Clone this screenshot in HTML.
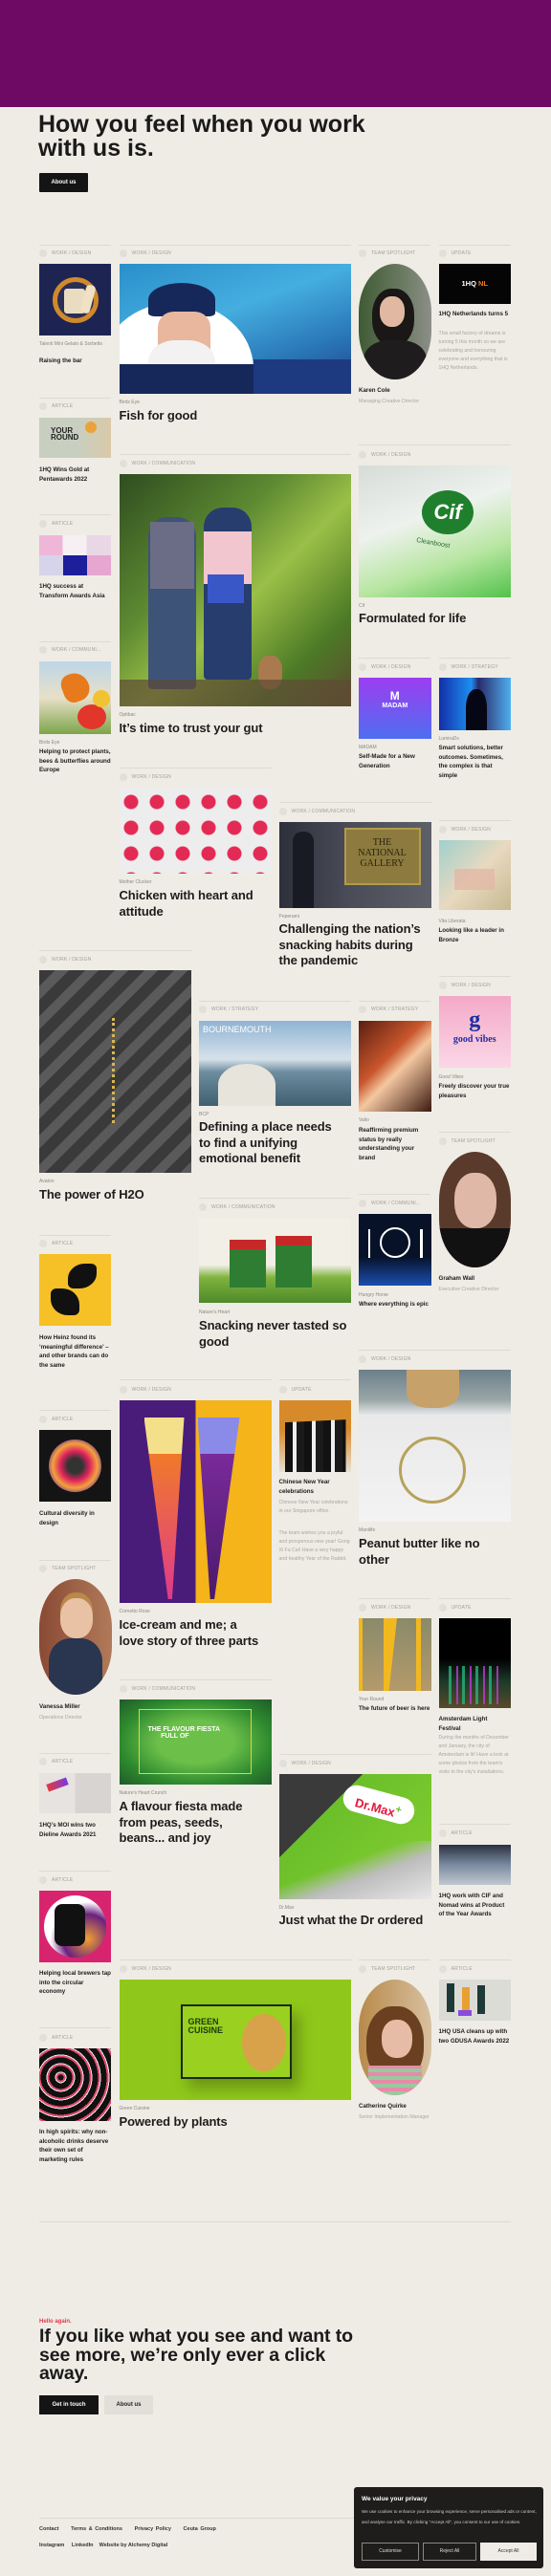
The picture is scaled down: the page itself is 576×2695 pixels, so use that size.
<!DOCTYPE html>
<html><head><meta charset="utf-8">
<style>
*{margin:0;padding:0;box-sizing:border-box}
body{width:576px;height:2695px;background:#efece5;font-family:"Liberation Sans",sans-serif;color:#1a1a1a;position:relative;overflow:hidden}
.a{position:absolute}
.ln{position:absolute;height:1px;background:#dedad2}
.lb{position:absolute;font-size:5px;line-height:8px;color:#a3a09a;letter-spacing:.2px;padding-left:13px;white-space:nowrap}
.lb:before{content:"";position:absolute;left:0;top:0;width:8px;height:8px;border-radius:50%;background:#e2dfd8}
.br{position:absolute;font-size:5px;line-height:8px;color:#8a8882}
.t{position:absolute;font-weight:bold;font-size:6.2px;line-height:9.6px;color:#1c1c1c}
.T{position:absolute;font-weight:bold;font-size:13px;line-height:16.5px;color:#1c1c1c;letter-spacing:-.1px;white-space:nowrap}
.p{position:absolute;font-size:5.2px;line-height:9px;color:#a9a7a0}
.ov{position:absolute;border-radius:50%/42%;overflow:hidden}
</style></head><body>
<div class="a" style="left:40px;top:92px;font-weight:bold;font-size:25px;line-height:25px;color:#1a1a1a;z-index:0;letter-spacing:0">What we do isn't all we are.</div>
<div class="a" style="left:0;top:0;width:576px;height:112px;background:#6e0a63;z-index:1"></div>
<div class="a" style="left:40px;top:118px;font-weight:bold;font-size:25px;line-height:25px;letter-spacing:0">How you feel when you work<br>with us is.</div>
<div class="a" style="left:41px;top:181px;width:51px;height:20px;background:#141414;color:#fff;font-size:6px;font-weight:bold;line-height:20px;text-align:center;border-radius:1px">About us</div>

<!-- 1 Talenti -->
<div class="ln" style="left:41px;top:256px;width:75px"></div><div class="lb" style="left:41px;top:261px">WORK / DESIGN</div>
<div class="a" style="left:41px;top:276px;width:75px;height:75px;background:#1d2452"><div class="a" style="left:14px;top:14px;width:48px;height:48px;border-radius:50%;border:5px solid #d08a2c;background:#2b2f55"></div><div class="a" style="left:26px;top:26px;width:22px;height:26px;background:#e9dcc0;border-radius:3px"></div><div class="a" style="left:46px;top:22px;width:10px;height:30px;background:#f0e1c4;border-radius:4px;transform:rotate(15deg)"></div></div>
<div class="br" style="left:41px;top:356px;width:75px">Talenti Mini Gelato &amp; Sorbetto</div>
<div class="t" style="left:41px;top:373px">Raising the bar</div>

<!-- 2 Birds Eye -->
<div class="ln" style="left:124.5px;top:256px;width:242px"></div><div class="lb" style="left:124.5px;top:261px">WORK / DESIGN</div>
<div class="a" style="left:124.5px;top:276px;width:242px;height:136px;background:linear-gradient(160deg,#2a8fc9,#45aee0 40%,#2b7ab9 70%,#1f3f86);overflow:hidden"><div class="a" style="left:-20px;top:40px;width:160px;height:140px;border-radius:50%;background:#fff"></div><div class="a" style="left:30px;top:20px;width:70px;height:35px;border-radius:50% 50% 10% 10%;background:#16285a"></div><div class="a" style="left:40px;top:50px;width:55px;height:55px;background:#e8b79d;border-radius:30%"></div><div class="a" style="left:30px;top:80px;width:70px;height:56px;background:#f2f2f2;border-radius:40% 40% 0 0"></div><div class="a" style="left:0;top:105px;width:150px;height:31px;background:#16285a"></div><div class="a" style="left:140px;top:100px;width:102px;height:36px;background:#1d3a80"></div></div>
<div class="br" style="left:124.5px;top:417px">Birds Eye</div>
<div class="T" style="left:124.5px;top:427px">Fish for good</div>

<!-- 3 Karen -->
<div class="ln" style="left:375px;top:256px;width:75px"></div><div class="lb" style="left:375px;top:261px">TEAM SPOTLIGHT</div>
<div class="ov" style="left:375px;top:276px;width:76px;height:121px;background:linear-gradient(90deg,#3f5b35,#6b7a62 60%,#8c8f88)"><div class="a" style="left:14px;top:26px;width:44px;height:60px;border-radius:45%;background:#1a1716"></div><div class="a" style="left:22px;top:34px;width:26px;height:32px;border-radius:45%;background:#e1b8a2"></div><div class="a" style="left:5px;top:80px;width:66px;height:50px;background:#1e1c1c;border-radius:40% 40% 0 0"></div></div>
<div class="t" style="left:375px;top:404px">Karen Cole</div>
<div class="p" style="left:375px;top:416px;width:70px">Managing Creative Director</div>

<!-- 4 NL -->
<div class="ln" style="left:458.5px;top:256px;width:75.5px"></div><div class="lb" style="left:458.5px;top:261px">UPDATE</div>
<div class="a" style="left:458.5px;top:276px;width:75.5px;height:42px;background:#050505;color:#fff;font-weight:bold;font-size:7.5px;line-height:42px;text-align:center">1HQ <span style="color:#f07a1a">NL</span></div>
<div class="t" style="left:458.5px;top:324px;width:76px">1HQ Netherlands turns 5</div>
<div class="p" style="left:458.5px;top:345px;width:75px">This small factory of dreams is turning 5 this month so we are celebrating and honouring everyone and everything that is 1HQ Netherlands.</div>

<!-- 5 -->
<div class="ln" style="left:41px;top:416px;width:75px"></div><div class="lb" style="left:41px;top:421px">ARTICLE</div>
<div class="a" style="left:41px;top:437px;width:75px;height:42px;background:linear-gradient(90deg,#c9cfc0 55%,#d9c9a8)"><div class="a" style="left:12px;top:10px;font-weight:bold;font-size:8px;line-height:7px;color:#222">YOUR<br>ROUND</div><div class="a" style="left:48px;top:4px;width:12px;height:12px;border-radius:50%;background:#eaa23a"></div></div>
<div class="t" style="left:41px;top:487px;width:75px">1HQ Wins Gold at Pentawards 2022</div>

<!-- 6 -->
<div class="ln" style="left:41px;top:538px;width:75px"></div><div class="lb" style="left:41px;top:544px">ARTICLE</div>
<div class="a" style="left:41px;top:560px;width:75px;height:42px;background:linear-gradient(90deg,#f0b6d8 33%,#f6f0f4 33%,#f6f0f4 66%,#e9d7e6 66%)"><div class="a" style="left:25px;top:21px;width:25px;height:21px;background:#1c1e9a"></div><div class="a" style="left:0;top:21px;width:25px;height:21px;background:#d6d4ea"></div><div class="a" style="left:50px;top:21px;width:25px;height:21px;background:#e6a6cf"></div></div>
<div class="t" style="left:41px;top:609px;width:72px">1HQ success at Transform Awards Asia</div>

<!-- 7 -->
<div class="ln" style="left:41px;top:671px;width:75px"></div><div class="lb" style="left:41px;top:676px">WORK / COMMUNI...</div>
<div class="a" style="left:41px;top:692px;width:75px;height:76px;background:linear-gradient(180deg,#bcd6e8,#e8e0c8 50%,#7da54a)"><div class="a" style="left:24px;top:12px;width:28px;height:30px;background:#e77a1c;border-radius:40% 60% 50% 40%;transform:rotate(-20deg)"></div><div class="a" style="left:40px;top:45px;width:30px;height:26px;background:#e2362a;border-radius:50%"></div><div class="a" style="left:56px;top:30px;width:18px;height:18px;background:#f1c232;border-radius:50%"></div></div>
<div class="br" style="left:41px;top:773px">Birds Eye</div>
<div class="t" style="left:41px;top:782px;width:75px">Helping to protect plants, bees &amp; butterflies around Europe</div>

<!-- 8 Optibac -->
<div class="ln" style="left:124.5px;top:475px;width:242px"></div><div class="lb" style="left:124.5px;top:481px">WORK / COMMUNICATION</div>
<div class="a" style="left:124.5px;top:496px;width:242px;height:243px;background:linear-gradient(135deg,#2f4d1f,#5d8a32 35%,#9bbf47 55%,#4c7a26 80%,#5d4a31);overflow:hidden"><div class="a" style="left:30px;top:45px;width:50px;height:180px;background:#3d5378;border-radius:20px 20px 4px 4px"></div><div class="a" style="left:32px;top:50px;width:46px;height:70px;background:#6b6d86"></div><div class="a" style="left:88px;top:35px;width:50px;height:180px;background:#263d6e;border-radius:20px 20px 4px 4px"></div><div class="a" style="left:88px;top:60px;width:50px;height:55px;background:#f2c6cf"></div><div class="a" style="left:92px;top:105px;width:38px;height:30px;background:#3a57c8"></div><div class="a" style="left:145px;top:190px;width:25px;height:35px;background:#a87a4e;border-radius:40%"></div><div class="a" style="left:0;top:215px;width:242px;height:28px;background:#5e4a35;opacity:.7"></div></div>
<div class="br" style="left:124.5px;top:744px">Optibac</div>
<div class="T" style="left:124.5px;top:754px">It’s time to trust your gut</div>

<!-- 9 Cif -->
<div class="ln" style="left:375px;top:465px;width:159px"></div><div class="lb" style="left:375px;top:472px">WORK / DESIGN</div>
<div class="a" style="left:375px;top:487px;width:159px;height:138px;background:linear-gradient(160deg,#d8dcd8,#eef2ee 40%,#b7e6a1 70%,#52c24a);overflow:hidden"><div class="a" style="left:66px;top:26px;width:54px;height:46px;border-radius:50%;background:#1f7f2c;color:#fff;font-weight:bold;font-style:italic;font-size:22px;line-height:46px;text-align:center">Cif</div><div class="a" style="left:60px;top:78px;font-size:7px;color:#2b6b33;transform:rotate(10deg)">Cleanboost</div></div>
<div class="br" style="left:375px;top:630px">Cif</div>
<div class="T" style="left:375px;top:639px">Formulated for life</div>

<!-- 10 Madam -->
<div class="ln" style="left:375px;top:688px;width:75px"></div><div class="lb" style="left:375px;top:694px">WORK / DESIGN</div>
<div class="a" style="left:375px;top:709px;width:75.5px;height:64px;background:linear-gradient(180deg,#9c3ef0,#4f6ef0);color:#fff;text-align:center;font-weight:bold"><div style="font-size:12px;padding-top:12px">M</div><div style="font-size:7px">MADAM</div></div>
<div class="br" style="left:375px;top:778px">MADAM</div>
<div class="t" style="left:375px;top:787px;width:75px">Self-Made for a New Generation</div>

<!-- 11 Lumira -->
<div class="ln" style="left:458.5px;top:688px;width:75.5px"></div><div class="lb" style="left:458.5px;top:694px">WORK / STRATEGY</div>
<div class="a" style="left:458.5px;top:709px;width:75.5px;height:55px;background:linear-gradient(90deg,#1230a8,#1e8ef0 45%,#2a2a6a 55%,#4fb0f0)"><div class="a" style="left:28px;top:12px;width:22px;height:43px;background:#050814;border-radius:45% 45% 0 0"></div></div>
<div class="br" style="left:458.5px;top:769px">LumiraDx</div>
<div class="t" style="left:458.5px;top:778px;width:75px">Smart solutions, better outcomes. Sometimes, the complex is that simple</div>

<!-- 12 Mother Clucker -->
<div class="ln" style="left:124.5px;top:803px;width:159px"></div><div class="lb" style="left:124.5px;top:809px">WORK / DESIGN</div>
<div class="a" style="left:124.5px;top:824px;width:159px;height:90px;background:#eeeded;background-image:radial-gradient(circle at 12px 15px,#e32a55 7px,transparent 8px);background-size:27px 27px"></div>
<div class="br" style="left:124.5px;top:919px">Mother Clucker</div>
<div class="T" style="left:124.5px;top:929px">Chicken with heart and<br>attitude</div>

<!-- 13 Peperami -->
<div class="ln" style="left:291.5px;top:839px;width:159px"></div><div class="lb" style="left:291.5px;top:845px">WORK / COMMUNICATION</div>
<div class="a" style="left:291.5px;top:860px;width:159px;height:90px;background:linear-gradient(90deg,#2d2f3a,#494c58 45%,#5d6068)"><div class="a" style="left:68px;top:6px;width:80px;height:60px;background:#8c7a3e;border:2px solid #b49a4c;color:#2a2412;font-family:'Liberation Serif',serif;font-size:10px;line-height:11px;text-align:center;padding-top:8px">THE<br>NATIONAL<br>GALLERY</div><div class="a" style="left:14px;top:10px;width:22px;height:80px;background:#191b24;border-radius:10px 10px 0 0"></div></div>
<div class="br" style="left:291.5px;top:955px">Peperami</div>
<div class="T" style="left:291.5px;top:964px">Challenging the nation’s<br>snacking habits during<br>the pandemic</div>

<!-- 14 Vita -->
<div class="ln" style="left:458.5px;top:858px;width:75.5px"></div><div class="lb" style="left:458.5px;top:864px">WORK / DESIGN</div>
<div class="a" style="left:458.5px;top:879px;width:75.5px;height:73px;background:linear-gradient(135deg,#9fd0cc,#e8d9c0 50%,#c7b98f)"><div class="a" style="left:16px;top:30px;width:42px;height:22px;background:#e2b8a6;opacity:.8"></div></div>
<div class="br" style="left:458.5px;top:960px">Vita Liberata</div>
<div class="t" style="left:458.5px;top:969px;width:75px">Looking like a leader in Bronze</div>

<!-- 15 Avaton -->
<div class="ln" style="left:41px;top:994px;width:159px"></div><div class="lb" style="left:41px;top:1000px">WORK / DESIGN</div>
<div class="a" style="left:41px;top:1015px;width:159px;height:212px;background:repeating-linear-gradient(135deg,#3a3a3a 0 12px,#5a5a5a 12px 22px);"><div class="a" style="left:76px;top:50px;width:4px;height:110px;border-left:3px dotted #d9b652"></div></div>
<div class="br" style="left:41px;top:1232px">Avaton</div>
<div class="T" style="left:41px;top:1242px">The power of H2O</div>

<!-- 16 BCP -->
<div class="ln" style="left:208px;top:1047px;width:159px"></div><div class="lb" style="left:208px;top:1052px">WORK / STRATEGY</div>
<div class="a" style="left:208px;top:1068px;width:159px;height:89px;background:linear-gradient(180deg,#8fb4d4,#d7e2ea 45%,#6d8da0 60%,#3f6070)"><div class="a" style="left:4px;top:4px;color:#fff;font-size:9px">BOURNEMOUTH</div><div class="a" style="left:20px;top:45px;width:60px;height:44px;background:#e7e4dc;border-radius:50% 50% 0 0"></div></div>
<div class="br" style="left:208px;top:1162px">BCP</div>
<div class="T" style="left:208px;top:1171px">Defining a place needs<br>to find a unifying<br>emotional benefit</div>

<!-- 17 Valio -->
<div class="ln" style="left:375px;top:1047px;width:75px"></div><div class="lb" style="left:375px;top:1052px">WORK / STRATEGY</div>
<div class="a" style="left:375px;top:1068px;width:75.5px;height:95px;background:linear-gradient(135deg,#5a1e10,#c9562c 40%,#f4c7a0 55%,#3a1a10)"></div>
<div class="br" style="left:375px;top:1168px">Valio</div>
<div class="t" style="left:375px;top:1178px;width:75px">Reaffirming premium status by really understanding your brand</div>

<!-- 18 Good vibes -->
<div class="ln" style="left:458.5px;top:1021px;width:75.5px"></div><div class="lb" style="left:458.5px;top:1027px">WORK / DESIGN</div>
<div class="a" style="left:458.5px;top:1042px;width:75.5px;height:75px;background:linear-gradient(180deg,#f3a9c8,#fbd7e6);color:#1d2ea0;font-family:'Liberation Serif',serif;text-align:center;font-weight:bold"><div style="font-size:24px;line-height:30px;padding-top:10px">g</div><div style="font-size:10px">good vibes</div></div>
<div class="br" style="left:458.5px;top:1123px">Good Vibes</div>
<div class="t" style="left:458.5px;top:1132px;width:75px">Freely discover your true pleasures</div>

<!-- 19 Graham -->
<div class="ln" style="left:458.5px;top:1184px;width:75.5px"></div><div class="lb" style="left:458.5px;top:1190px">TEAM SPOTLIGHT</div>
<div class="ov" style="left:458.5px;top:1205px;width:75.5px;height:121px;background:#5a3a2a"><div class="a" style="left:16px;top:22px;width:44px;height:58px;border-radius:45%;background:#e0b8a8"></div><div class="a" style="left:0;top:80px;width:76px;height:45px;background:#111"></div></div>
<div class="t" style="left:458.5px;top:1333px">Graham Wall</div>
<div class="p" style="left:458.5px;top:1345px;width:72px">Executive Creative Director</div>

<!-- 20 Heinz -->
<div class="ln" style="left:41px;top:1292px;width:75px"></div><div class="lb" style="left:41px;top:1297px">ARTICLE</div>
<div class="a" style="left:41px;top:1312px;width:75px;height:75px;background:#f6c027"><div class="a" style="left:30px;top:10px;width:30px;height:26px;background:#111;border-radius:60% 20% 60% 20%"></div><div class="a" style="left:12px;top:36px;width:30px;height:28px;background:#111;border-radius:20% 60% 20% 60%"></div></div>
<div class="t" style="left:41px;top:1395px;width:75px">How Heinz found its ‘meaningful difference’ – and other brands can do the same</div>

<!-- 21 Nature's heart -->
<div class="ln" style="left:208px;top:1253px;width:159px"></div><div class="lb" style="left:208px;top:1259px">WORK / COMMUNICATION</div>
<div class="a" style="left:208px;top:1275px;width:159px;height:88px;background:linear-gradient(180deg,#f2efe6 55%,#7fb33e 70%,#4e8a2a)"><div class="a" style="left:32px;top:22px;width:38px;height:50px;background:#2e7d32;border-top:10px solid #c62828"></div><div class="a" style="left:80px;top:18px;width:38px;height:54px;background:#2e7d32;border-top:10px solid #c62828"></div></div>
<div class="br" style="left:208px;top:1369px">Nature’s Heart</div>
<div class="T" style="left:208px;top:1379px">Snacking never tasted so<br>good</div>

<!-- 22 Hungry horse -->
<div class="ln" style="left:375px;top:1249px;width:75px"></div><div class="lb" style="left:375px;top:1255px">WORK / COMMUNI...</div>
<div class="a" style="left:375px;top:1270px;width:75.5px;height:75px;background:linear-gradient(180deg,#071228 60%,#1b4fb0)"><div class="a" style="left:22px;top:14px;width:32px;height:32px;border:2px solid #fff;border-radius:50%"></div><div class="a" style="left:10px;top:16px;width:2px;height:30px;background:#fff"></div><div class="a" style="left:64px;top:16px;width:3px;height:30px;background:#fff"></div></div>
<div class="br" style="left:375px;top:1351px">Hungry Horse</div>
<div class="t" style="left:375px;top:1360px;width:75px">Where everything is epic</div>

<!-- 23 Peanut -->
<div class="ln" style="left:375px;top:1412px;width:159px"></div><div class="lb" style="left:375px;top:1418px">WORK / DESIGN</div>
<div class="a" style="left:375px;top:1433px;width:159px;height:159px;background:linear-gradient(180deg,#6b7f8a,#9aa7a8 20%,#e9e9e9 30%,#f3f3f3);overflow:hidden"><div class="a" style="left:50px;top:0;width:55px;height:40px;background:#c6a26a;border-radius:0 0 40% 40%"></div><div class="a" style="left:42px;top:70px;width:70px;height:70px;border-radius:50%;border:3px solid #b7a25c"></div></div>
<div class="br" style="left:375px;top:1597px">Manilife</div>
<div class="T" style="left:375px;top:1607px">Peanut butter like no<br>other</div>

<!-- 24 Cornetto -->
<div class="ln" style="left:124.5px;top:1443px;width:159px"></div><div class="lb" style="left:124.5px;top:1450px">WORK / DESIGN</div>
<div class="a" style="left:124.5px;top:1465px;width:159px;height:212px;background:linear-gradient(90deg,#4a1c7a 50%,#f4b41a 50%);overflow:hidden"><div class="a" style="left:26px;top:18px;width:42px;height:190px;background:linear-gradient(180deg,#f4e08a 20%,#f07a2a 20%,#e03a8a);clip-path:polygon(0 0,100% 0,70% 100%,60% 100%)"></div><div class="a" style="left:82px;top:18px;width:44px;height:190px;background:linear-gradient(180deg,#8a8ae8 20%,#7a2a9a 20%,#4a1a6a);clip-path:polygon(0 0,100% 0,40% 100%,30% 100%)"></div></div>
<div class="br" style="left:124.5px;top:1682px">Cornetto Rose</div>
<div class="T" style="left:124.5px;top:1692px">Ice-cream and me; a<br>love story of three parts</div>

<!-- 25 CNY -->
<div class="ln" style="left:291.5px;top:1443px;width:75px"></div><div class="lb" style="left:291.5px;top:1450px">UPDATE</div>
<div class="a" style="left:291.5px;top:1465px;width:75.5px;height:75px;background:linear-gradient(180deg,#d78a2a 40%,#e8e0d4)"><div class="a" style="left:6px;top:14px;width:64px;height:61px;background:repeating-linear-gradient(90deg,#111 0 8px,#eee 8px 12px,#1a1a1a 12px 20px);clip-path:polygon(0 15%,100% 10%,100% 100%,0 100%)"></div></div>
<div class="t" style="left:291.5px;top:1546px;width:75px">Chinese New Year celebrations</div>
<div class="p" style="left:291.5px;top:1568px;width:75px">Chinese New Year celebrations in our Singapore office.</div>
<div class="p" style="left:291.5px;top:1600px;width:75px">The team wishes you a joyful and prosperous new year! Gong Xi Fa Cai! Have a very happy and healthy Year of the Rabbit.</div>

<!-- 26 Cultural -->
<div class="ln" style="left:41px;top:1475px;width:75px"></div><div class="lb" style="left:41px;top:1481px">ARTICLE</div>
<div class="a" style="left:41px;top:1496px;width:75px;height:75px;background:#141414"><div class="a" style="left:10px;top:10px;width:55px;height:55px;border-radius:50%;background:radial-gradient(circle,#333 20%,#e0245e 40%,#f2a33a 60%,#6a2aa0 80%,transparent 82%)"></div></div>
<div class="t" style="left:41px;top:1579px;width:75px">Cultural diversity in design</div>

<!-- 27 Vanessa -->
<div class="ln" style="left:41px;top:1632px;width:75px"></div><div class="lb" style="left:41px;top:1637px">TEAM SPOTLIGHT</div>
<div class="ov" style="left:41px;top:1652px;width:75.5px;height:121px;background:linear-gradient(90deg,#8a4a34,#b07a5a)"><div class="a" style="left:22px;top:20px;width:34px;height:42px;border-radius:45%;background:#e9c1a4;box-shadow:0 -6px 0 #b9884a"></div><div class="a" style="left:10px;top:62px;width:56px;height:60px;background:#2a3550;border-radius:40% 40% 0 0"></div></div>
<div class="t" style="left:41px;top:1781px">Vanessa Miller</div>
<div class="p" style="left:41px;top:1793px;width:75px">Operations Director</div>

<!-- 28 Your round -->
<div class="ln" style="left:375px;top:1672px;width:75px"></div><div class="lb" style="left:375px;top:1678px">WORK / DESIGN</div>
<div class="a" style="left:375px;top:1693px;width:75.5px;height:76px;background:linear-gradient(180deg,#8a8a6a,#b49a6a)"><div class="a" style="left:0;top:0;width:4px;height:76px;background:#f2b820"></div><div class="a" style="left:26px;top:0;width:14px;height:76px;background:#f2b820;clip-path:polygon(0 0,100% 0,40% 100%,0 100%)"></div><div class="a" style="left:60px;top:0;width:5px;height:76px;background:#f2b820"></div></div>
<div class="br" style="left:375px;top:1774px">Your Round</div>
<div class="t" style="left:375px;top:1783px;width:75px">The future of beer is here</div>

<!-- 29 Amsterdam -->
<div class="ln" style="left:458.5px;top:1672px;width:75.5px"></div><div class="lb" style="left:458.5px;top:1678px">UPDATE</div>
<div class="a" style="left:458.5px;top:1693px;width:75.5px;height:94px;background:linear-gradient(180deg,#000 45%,#1b3a2a 70%,#5a4a2a)"><div class="a" style="left:10px;top:50px;width:55px;height:40px;background:repeating-linear-gradient(90deg,#2ab07a 0 3px,transparent 3px 8px,#c03ad0 8px 10px,transparent 10px 14px);opacity:.8"></div></div>
<div class="t" style="left:458.5px;top:1794px;width:75px">Amsterdam Light Festival</div>
<div class="p" style="left:458.5px;top:1814px;width:75px">During the months of December and January, the city of Amsterdam is lit! Have a look at some photos from the team's visits to the city's installations.</div>

<!-- 30 Flavour fiesta -->
<div class="ln" style="left:124.5px;top:1757px;width:159px"></div><div class="lb" style="left:124.5px;top:1763px">WORK / COMMUNICATION</div>
<div class="a" style="left:124.5px;top:1778px;width:159px;height:89px;background:radial-gradient(ellipse at center,#6cc04a 35%,#2e8a2e 70%,#1f5a2a);"><div class="a" style="left:20px;top:10px;width:118px;height:68px;border:1px solid #e8d23a"></div><div class="a" style="left:30px;top:28px;color:#fff;font-weight:bold;font-size:7px;line-height:7px">THE FLAVOUR FIESTA<br>&nbsp;&nbsp;&nbsp;&nbsp;&nbsp;&nbsp;&nbsp;FULL OF</div></div>
<div class="br" style="left:124.5px;top:1872px">Nature’s Heart Crunch</div>
<div class="T" style="left:124.5px;top:1882px">A flavour fiesta made<br>from peas, seeds,<br>beans... and joy</div>

<!-- 31 MOI -->
<div class="ln" style="left:41px;top:1834px;width:75px"></div><div class="lb" style="left:41px;top:1839px">ARTICLE</div>
<div class="a" style="left:41px;top:1855px;width:75px;height:42px;background:linear-gradient(90deg,#e6e3e0 50%,#d8d4d2 50%)"><div class="a" style="left:8px;top:8px;width:22px;height:8px;background:linear-gradient(90deg,#e23a3a,#7a3ae0);transform:rotate(-20deg)"></div></div>
<div class="t" style="left:41px;top:1905px;width:75px">1HQ’s MOI wins two Dieline Awards 2021</div>

<!-- 32 Dr Max -->
<div class="ln" style="left:291.5px;top:1835px;width:159px"></div><div class="lb" style="left:291.5px;top:1841px">WORK / DESIGN</div>
<div class="a" style="left:291.5px;top:1856px;width:159px;height:131px;background:linear-gradient(135deg,#3a3a3a 30%,#6bbf2a 30%,#86cf32);overflow:hidden"><div class="a" style="left:66px;top:18px;width:76px;height:28px;border-radius:14px;background:#fff;color:#e2183a;font-weight:bold;font-size:13px;line-height:28px;text-align:center;transform:rotate(15deg)">Dr.Max<sup style="color:#6bbf2a">+</sup></div><div class="a" style="left:0;top:70px;width:159px;height:61px;background:linear-gradient(160deg,transparent 40%,#bdbdbd 60%,#e8e8e8)"></div></div>
<div class="br" style="left:291.5px;top:1992px">Dr.Max</div>
<div class="T" style="left:291.5px;top:2001px">Just what the Dr ordered</div>

<!-- 33 -->
<div class="ln" style="left:458.5px;top:1908px;width:75.5px"></div><div class="lb" style="left:458.5px;top:1914px">ARTICLE</div>
<div class="a" style="left:458.5px;top:1930px;width:75.5px;height:42px;background:linear-gradient(180deg,#2a3040,#7a8aa0 50%,#c0c8d0)"></div>
<div class="t" style="left:458.5px;top:1979px;width:75px">1HQ work with CIF and Nomad wins at Product of the Year Awards</div>

<!-- 34 -->
<div class="ln" style="left:41px;top:1957px;width:75px"></div><div class="lb" style="left:41px;top:1963px">ARTICLE</div>
<div class="a" style="left:41px;top:1978px;width:75px;height:75px;background:#d8246e"><div class="a" style="left:5px;top:5px;width:65px;height:65px;border-radius:50%;background:radial-gradient(circle at 70% 70%,#f0a030,#6a2080 40%,#fff 60%)"></div><div class="a" style="left:16px;top:14px;width:32px;height:44px;border-radius:8px;background:#111"></div></div>
<div class="t" style="left:41px;top:2060px;width:75px">Helping local brewers tap into the circular economy</div>

<!-- 35 Green Cuisine -->
<div class="ln" style="left:124.5px;top:2050px;width:242px"></div><div class="lb" style="left:124.5px;top:2056px">WORK / DESIGN</div>
<div class="a" style="left:124.5px;top:2071px;width:242px;height:126px;background:#8fc81a"><div class="a" style="left:64px;top:26px;width:116px;height:78px;background:#9ad020;border:2px solid #1a2a12;box-shadow:8px 10px 14px rgba(0,0,0,.25)"><div class="a" style="left:6px;top:12px;font-weight:bold;font-size:9px;line-height:9px;color:#1a3a12">GREEN<br>CUISINE</div><div class="a" style="left:62px;top:8px;width:46px;height:60px;border-radius:50%;background:#d8a24a"></div></div></div>
<div class="br" style="left:124.5px;top:2202px">Green Cuisine</div>
<div class="T" style="left:124.5px;top:2212px">Powered by plants</div>

<!-- 36 Catherine -->
<div class="ln" style="left:375px;top:2050px;width:75px"></div><div class="lb" style="left:375px;top:2056px">TEAM SPOTLIGHT</div>
<div class="ov" style="left:375px;top:2071px;width:75.5px;height:121px;background:linear-gradient(90deg,#b88a4a,#d8c0a0)"><div class="a" style="left:8px;top:28px;width:60px;height:80px;border-radius:45%;background:#6a4020"></div><div class="a" style="left:24px;top:42px;width:32px;height:40px;border-radius:45%;background:#e6bca6"></div><div class="a" style="left:10px;top:90px;width:56px;height:35px;background:repeating-linear-gradient(0deg,#e98aa8 0 4px,#9ac8a0 4px 8px)"></div></div>
<div class="t" style="left:375px;top:2199px">Catherine Quirke</div>
<div class="p" style="left:375px;top:2211px;width:75px">Senior Implementation Manager</div>

<!-- 37 GDUSA -->
<div class="ln" style="left:458.5px;top:2050px;width:75.5px"></div><div class="lb" style="left:458.5px;top:2056px">ARTICLE</div>
<div class="a" style="left:458.5px;top:2071px;width:75.5px;height:43px;background:#dcdcd6"><div class="a" style="left:8px;top:4px;width:8px;height:30px;background:#1d3a38"></div><div class="a" style="left:24px;top:8px;width:8px;height:28px;background:#e8a030"></div><div class="a" style="left:40px;top:6px;width:8px;height:30px;background:#1d3a38"></div><div class="a" style="left:20px;top:32px;width:14px;height:6px;background:#8a4ae0"></div></div>
<div class="t" style="left:458.5px;top:2121px;width:75px">1HQ USA cleans up with two GDUSA Awards 2022</div>

<!-- 38 -->
<div class="ln" style="left:41px;top:2121px;width:75px"></div><div class="lb" style="left:41px;top:2128px">ARTICLE</div>
<div class="a" style="left:41px;top:2143px;width:75px;height:76px;background:repeating-radial-gradient(circle at 30% 40%,#111 0 3px,#e04a6a 3px 5px,#eee 5px 6px,#111 6px 9px)"></div>
<div class="t" style="left:41px;top:2226px;width:75px">In high spirits: why non-alcoholic drinks deserve their own set of marketing rules</div>

<!-- footer CTA -->
<div class="ln" style="left:41px;top:2324px;width:493px"></div>
<div class="a" style="left:41px;top:2426px;font-size:6px;font-weight:bold;color:#e2384a">Hello again.</div>
<div class="a" style="left:41px;top:2435px;font-weight:bold;font-size:19.5px;line-height:19.5px;letter-spacing:-.1px">If you like what you see and want to<br>see more, we’re only ever a click<br>away.</div>
<div class="a" style="left:41px;top:2506px;width:62px;height:20px;background:#141414;color:#fff;font-size:6px;font-weight:bold;line-height:20px;text-align:center">Get in touch</div>
<div class="a" style="left:109px;top:2506px;width:51px;height:20px;background:#e2dfd8;color:#222;font-size:6px;font-weight:bold;line-height:20px;text-align:center">About us</div>
<div class="ln" style="left:41px;top:2634px;width:493px"></div>
<div class="a" style="left:41px;top:2643px;font-size:5.5px;font-weight:bold;color:#333;word-spacing:1px">Contact&nbsp;&nbsp;&nbsp;&nbsp;&nbsp;Terms &amp; Conditions&nbsp;&nbsp;&nbsp;&nbsp;&nbsp;Privacy Policy&nbsp;&nbsp;&nbsp;&nbsp;&nbsp;Ceuta Group</div>
<div class="a" style="left:41px;top:2660px;font-size:5.5px;font-weight:bold;color:#333">Instagram&nbsp;&nbsp;&nbsp;&nbsp;&nbsp;LinkedIn&nbsp;&nbsp;&nbsp;&nbsp;Website by Alchemy Digital</div>

<!-- cookie -->
<div class="a" style="left:370px;top:2602px;width:198px;height:85px;background:#1e1d1c;border-radius:3px">
<div class="a" style="left:8px;top:9px;color:#fff;font-weight:bold;font-size:6.5px">We value your privacy</div>
<div class="a" style="left:8px;top:21px;width:185px;color:#cfccc6;font-size:4.6px;line-height:10.7px">We use cookies to enhance your browsing experience, serve personalised ads or content, and analyse our traffic. By clicking "Accept All", you consent to our use of cookies.</div>
<div class="a" style="left:8px;top:58px;width:60px;height:19px;border:1px solid #8a8884;color:#ddd;font-size:5px;line-height:17px;text-align:center">Customise</div>
<div class="a" style="left:72px;top:58px;width:56px;height:19px;border:1px solid #8a8884;color:#ddd;font-size:5px;line-height:17px;text-align:center">Reject All</div>
<div class="a" style="left:132px;top:58px;width:59px;height:19px;background:#efece5;color:#333;font-size:5px;line-height:19px;text-align:center">Accept All</div>
</div>
</body></html>
